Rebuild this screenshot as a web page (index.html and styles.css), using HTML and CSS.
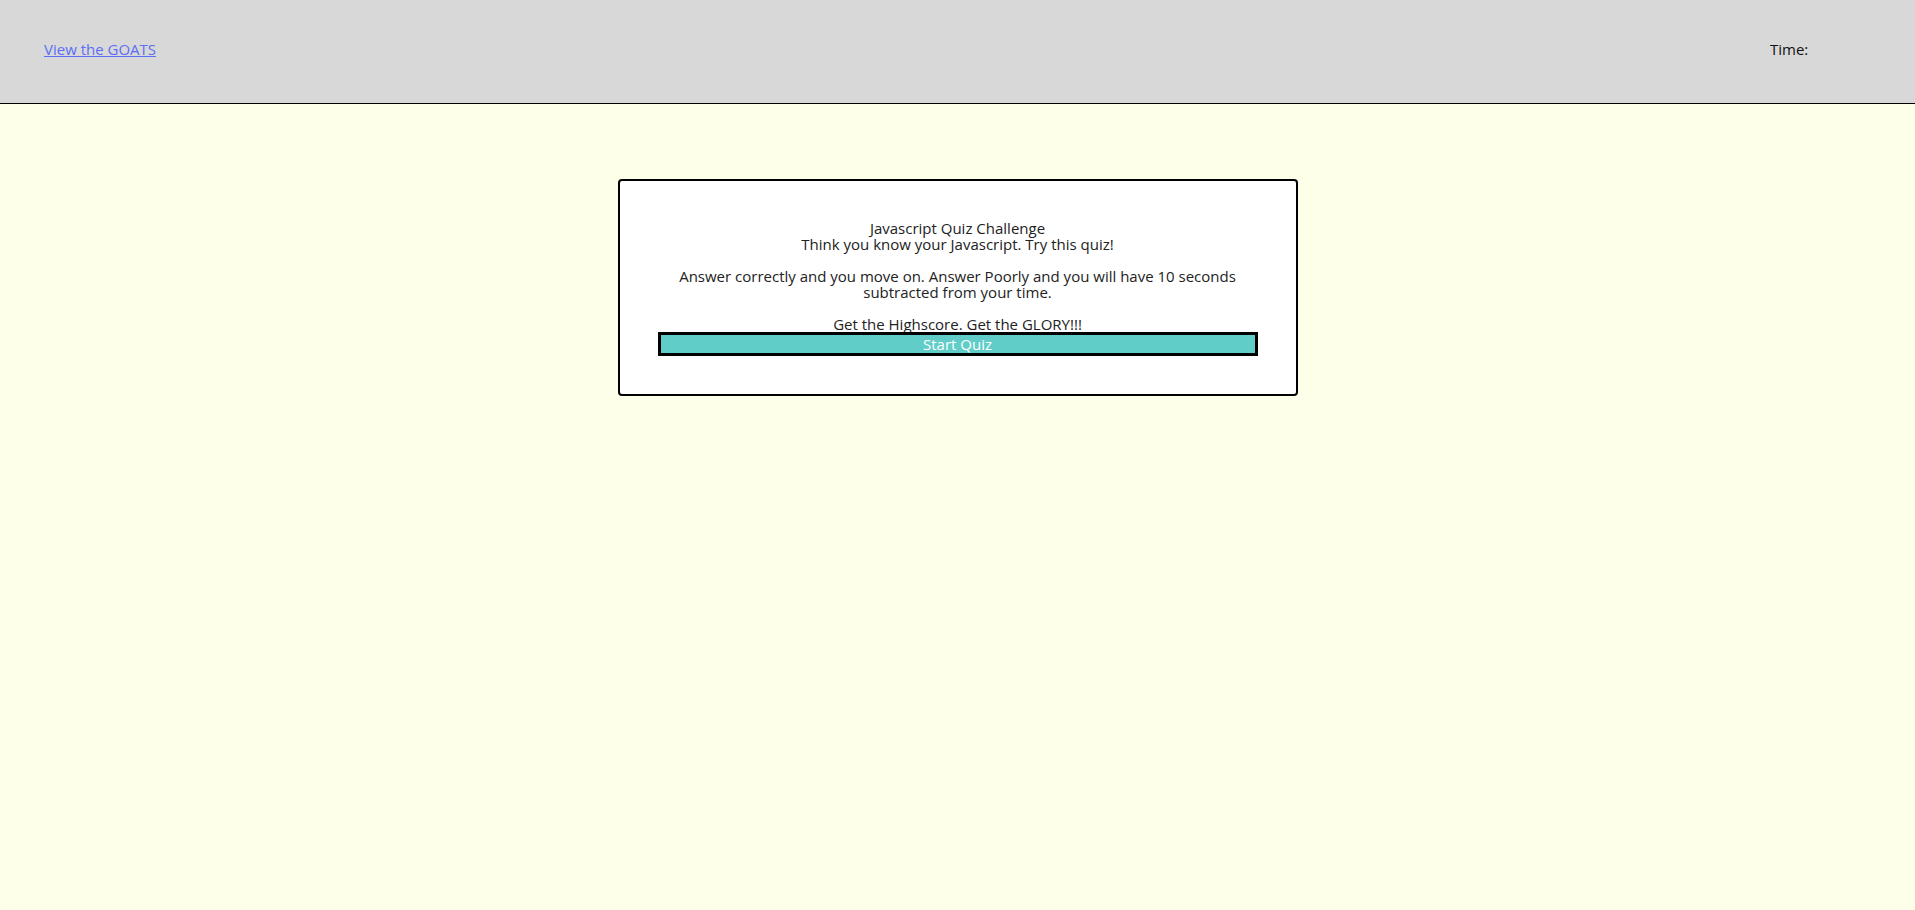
FILE: index.html
```html
<!DOCTYPE html>
<html lang="en">
<head>
<meta charset="utf-8">
<title>Javascript Quiz Challenge</title>
<link rel="stylesheet" href="styles.css">
</head>
<body>
<header class="top-bar">
  <a class="goats-link" href="#">View the GOATS</a>
  <div class="timer">Time: <span class="timer-value"></span></div>
</header>
<main class="main">
  <section class="card">
    <div class="intro">
      <div class="line">Javascript Quiz Challenge</div>
      <div class="line">Think you know your Javascript. Try this quiz!</div>
      <div class="line blank"></div>
      <div class="line">Answer correctly and you move on. Answer Poorly and you will have 10 seconds subtracted from your time.</div>
      <div class="line blank"></div>
      <div class="line">Get the Highscore. Get the GLORY!!!</div>
    </div>
    <button class="start-btn" type="button">Start Quiz</button>
  </section>
</main>
</body>
</html>
```
FILE: styles.css
```css
html, body {
  margin: 0;
  padding: 0;
}
body {
  background: #feffe9;
  font-family: "Open Sans", "Noto Sans", sans-serif;
  font-size: 15px;
  color: #222;
  min-height: 910px;
}
.top-bar {
  height: 104px;
  box-sizing: border-box;
  padding: 0 107px 6px 44px;
  background: #d8d8d8;
  border-bottom: 1px solid #000;
  display: flex;
  align-items: center;
  justify-content: space-between;
  font-size: 15px;
}
.goats-link {
  color: #5b6ef5;
  text-decoration: underline;
}
.timer {
  color: #111;
  width: 38px;
  white-space: nowrap;
}
.main {
  display: flex;
  justify-content: center;
  padding-top: 75px;
}
.card {
  width: 600px;
  padding: 39px 38px 38px;
  border: 2px solid #000;
  border-radius: 4px;
  background: #fff;
  display: flex;
  flex-direction: column;
}
.intro {
  text-align: center;
  line-height: 16px;
}
.line {
  padding: 0 12px;
}
.blank {
  height: 16px;
}
.start-btn {
  display: block;
  width: 100%;
  height: 24px;
  margin: 0;
  padding: 0;
  border: 3px solid #000;
  background: #61cdc9;
  color: #fff;
  font-family: inherit;
  font-size: 15px;
  line-height: 16px;
  cursor: pointer;
}
```
